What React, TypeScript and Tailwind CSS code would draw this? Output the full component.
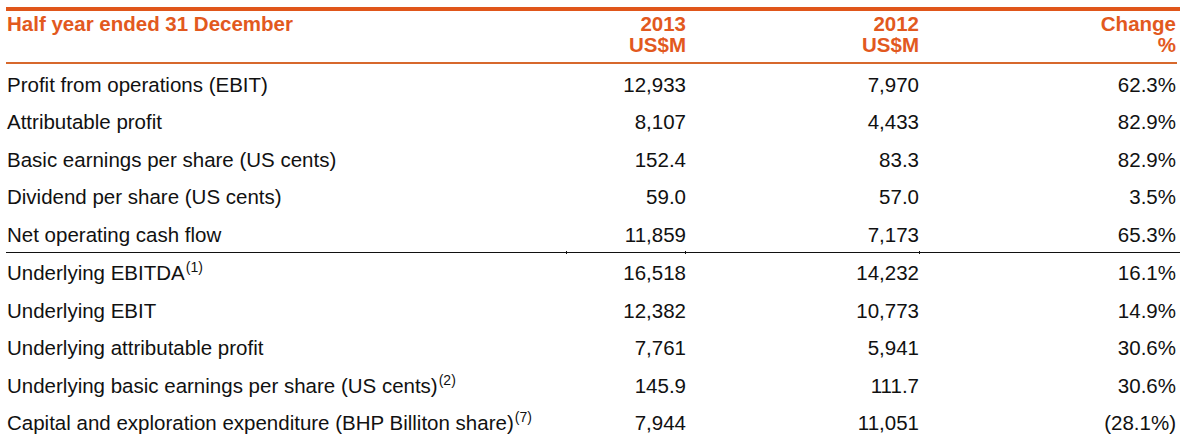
import React from "react";

type Row = { label: string; sup?: string; a: string; b: string; c: string };

const top: Row[] = [
  { label: "Profit from operations (EBIT)", a: "12,933", b: "7,970", c: "62.3%" },
  { label: "Attributable profit", a: "8,107", b: "4,433", c: "82.9%" },
  { label: "Basic earnings per share (US cents)", a: "152.4", b: "83.3", c: "82.9%" },
  { label: "Dividend per share (US cents)", a: "59.0", b: "57.0", c: "3.5%" },
  { label: "Net operating cash flow", a: "11,859", b: "7,173", c: "65.3%" },
];

const bottom: Row[] = [
  { label: "Underlying EBITDA", sup: "(1)", a: "16,518", b: "14,232", c: "16.1%" },
  { label: "Underlying EBIT", a: "12,382", b: "10,773", c: "14.9%" },
  { label: "Underlying attributable profit", a: "7,761", b: "5,941", c: "30.6%" },
  { label: "Underlying basic earnings per share (US cents)", sup: "(2)", a: "145.9", b: "111.7", c: "30.6%" },
  { label: "Capital and exploration expenditure (BHP Billiton share)", sup: "(7)", a: "7,944", b: "11,051", c: "(28.1%)" },
];

const grid = "grid grid-cols-[560px_120px_233px_1fr]";

function DataRow({ r }: { r: Row }) {
  return (
    <div className={`${grid} h-[37.5px] pt-[2.5px] leading-[35px] text-[20.5px] text-[#111111]`}>
      <div className="pl-[1px] whitespace-nowrap">
        {r.label}
        {r.sup && <sup className="text-[14px] top-[-8px] ml-[1px]">{r.sup}</sup>}
      </div>
      <div className="text-right">{r.a}</div>
      <div className="text-right">{r.b}</div>
      <div className="text-right pr-[4px]">{r.c}</div>
    </div>
  );
}

export default function App() {
  return (
    <div
      className="w-[1183px] h-[437px] bg-white overflow-hidden pt-[7px] pl-[6px]"
      style={{ fontFamily: '"Liberation Sans", Arial, sans-serif' }}
    >
      <div className="w-[1174px]">
        <div className="h-[4px] bg-[#E0561A]" />
        <div className={`${grid} pt-[2px] pb-[7px] text-[20.5px] leading-[21px] font-bold text-[#E2591E]`}>
          <div className="pl-[1px] whitespace-nowrap">Half year ended 31 December</div>
          <div className="text-right">
            <div>2013</div>
            <div>US$M</div>
          </div>
          <div className="text-right">
            <div>2012</div>
            <div>US$M</div>
          </div>
          <div className="text-right pr-[4px]">
            <div>Change</div>
            <div>%</div>
          </div>
        </div>
        <div className="h-[2px] bg-[#D7682C] w-[1171px]" />
        {top.map((r) => (
          <DataRow key={r.label} r={r} />
        ))}
        <div className="relative h-[1px] bg-[#111]">
          <span className="absolute left-[560px] top-[-1px] h-[3px] w-[1px] bg-[#111]" />
          <span className="absolute left-[679px] top-[-1px] h-[3px] w-[1px] bg-[#111]" />
          <span className="absolute left-[913px] top-[-1px] h-[3px] w-[1px] bg-[#111]" />
        </div>
        {bottom.map((r) => (
          <DataRow key={r.label} r={r} />
        ))}
      </div>
    </div>
  );
}
